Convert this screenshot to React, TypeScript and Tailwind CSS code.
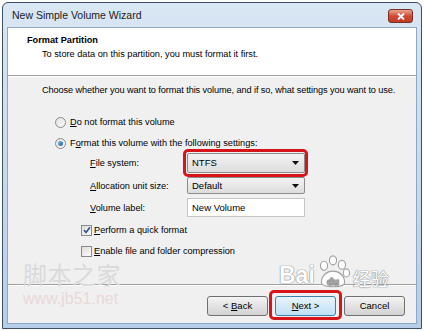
import React from "react";

const font = { fontFamily: '"Liberation Sans", Arial, sans-serif' };
const cjk = { fontFamily: '"Noto Sans CJK SC", sans-serif' };

function U({ children }: { children: React.ReactNode }) {
  return <span className="underline underline-offset-1">{children}</span>;
}

function Radio({ checked }: { checked?: boolean }) {
  return (
    <span className="flex h-[11px] w-[11px] items-center justify-center rounded-full border border-[#8a8a8a] bg-gradient-to-br from-[#e2e2e2] to-[#fbfbfb]">
      {checked && (
        <span className="h-[5px] w-[5px] rounded-full bg-gradient-to-br from-[#7fb6e8] to-[#1c5fa8]" />
      )}
    </span>
  );
}

function Check({ checked }: { checked?: boolean }) {
  return (
    <span className="flex h-[11px] w-[11px] items-center justify-center border border-[#8a8a8a] bg-gradient-to-br from-[#dedede] to-[#fbfbfb]">
      {checked && (
        <svg width="8" height="8" viewBox="0 0 8 8">
          <path d="M1 4 L3 6.5 L7 1.2" fill="none" stroke="#2a4f8f" strokeWidth="1.5" />
        </svg>
      )}
    </span>
  );
}

function Combo({ value, h }: { value: string; h: string }) {
  return (
    <div
      className={`flex ${h} w-[118px] items-center justify-between rounded-[2px] border border-[#8c8c8c] bg-gradient-to-b from-[#f3f3f3] to-[#dddddd] pl-[4px] pr-[5px]`}
    >
      <span className="text-[9.5px] text-black">{value}</span>
      <svg width="7" height="4" viewBox="0 0 7 4">
        <path d="M0 0 H7 L3.5 4 Z" fill="#111" />
      </svg>
    </div>
  );
}

function Button({ children, focus }: { children: React.ReactNode; focus?: boolean }) {
  return (
    <div
      className={`flex h-[20px] w-[61px] items-center justify-center rounded-[3px] border text-[9.5px] text-black ${
        focus
          ? "border-[#3c7fb1] bg-gradient-to-b from-[#e8f4fc] to-[#bfe0f4]"
          : "border-[#707070] bg-gradient-to-b from-[#f4f4f4] to-[#d2d2d2]"
      }`}
    >
      {children}
    </div>
  );
}

export default function App() {
  return (
    <div className="h-[331px] w-[424px] overflow-hidden bg-white p-[2px]" style={font}>
      <div className="relative flex h-[327px] w-[420px] flex-col rounded-t-[6px] border border-[#3d4f63] bg-gradient-to-b from-[#d9e6f4] to-[#b6cee8] px-[4px] pb-[4px]">
        {/* title bar */}
        <div className="flex h-[24px] shrink-0 items-center justify-between">
          <span className="pl-[5px] pt-[2px] text-[10.5px] text-[#1b1b1b]">New Simple Volume Wizard</span>
          <div className="mr-[4px] mt-[2px] flex h-[14px] w-[25px] items-center justify-center rounded-[3px] border border-[#7a2f24] bg-gradient-to-b from-[#e8a493] via-[#cf4a36] to-[#c33b27]">
            <svg width="8" height="7" viewBox="0 0 8 7">
              <path d="M1 0.5 L7 6.5 M7 0.5 L1 6.5" stroke="#fff" strokeWidth="1.8" />
            </svg>
          </div>
        </div>

        {/* client */}
        <div className="flex flex-1 flex-col border border-[#8ea7c4] bg-[#f0f0f0]">
          <div className="flex h-[47px] shrink-0 flex-col bg-white pl-[19px] pt-[5px] text-[9.2px] leading-[14px] text-black">
            <span className="font-bold">Format Partition</span>
            <span className="pl-[15px]">To store data on this partition, you must format it first.</span>
          </div>
          <div className="h-px bg-[#a0a0a0]" />
          <div className="h-px bg-white" />

          <div className="relative flex h-[207px] flex-col pl-[34px] pt-[6px] text-[9.2px] leading-[14px] text-black">
            <span className="whitespace-nowrap tracking-[-0.1px]">
              Choose whether you want to format this volume, and if so, what settings you want to use.
            </span>

            <div className="mt-[18px] flex items-center gap-[4px] pl-[13px]">
              <Radio />
              <span>
                <U>D</U>o not format this volume
              </span>
            </div>
            <div className="mt-[7px] flex items-center gap-[4px] pl-[13px]">
              <Radio checked />
              <span>
                F<U>o</U>rmat this volume with the following settings:
              </span>
            </div>

            <div className="mt-[3px] grid grid-cols-[97px_118px] items-center gap-y-[4px] pl-[48px]">
              <span>
                <U>F</U>ile system:
              </span>
              <div className="relative">
                <div className="pointer-events-none absolute -bottom-[4px] -left-[4px] -right-[3px] -top-[4px] rounded-[5px] border-[3px] border-[#d8141b]" />
                <Combo value="NTFS" h="h-[20px]" />
              </div>
              <span>
                <U>A</U>llocation unit size:
              </span>
              <Combo value="Default" h="h-[17px]" />
              <span>
                <U>V</U>olume label:
              </span>
              <div className="flex h-[19px] w-[118px] items-center border border-[#c5c5c5] bg-white pl-[4px] text-[9.5px]">
                New Volume
              </div>
            </div>

            <div className="mt-[6px] flex items-center gap-[2px] pl-[39px]">
              <Check checked />
              <span>
                <U>P</U>erform a quick format
              </span>
            </div>
            <div className="mt-[7px] flex items-center gap-[2px] pl-[39px]">
              <Check />
              <span>
                <U>E</U>nable file and folder compression
              </span>
            </div>

            {/* watermark */}
            <span
              className="pointer-events-none absolute left-[15px] top-[185px] text-[24px] leading-none tracking-[0.5px] text-[#dadada]"
              style={cjk}
            >
              脚本之家
            </span>
          </div>

          <div className="h-px bg-[#a0a0a0]" />
          <div className="h-px bg-white" />

          <div className="relative flex flex-1 items-start justify-end gap-[7px] pr-[11px] pt-[10px]">
            <span className="pointer-events-none absolute left-[15px] top-[5px] text-[16px] leading-none text-[#ead8d8]">
              www.jb51.net
            </span>
            <span
              className="pointer-events-none absolute left-[271px] top-[-31px] flex items-end font-bold leading-none text-white"
              style={{ textShadow: "0 0 1px #8f8f8f, 0 0 1px #8f8f8f, 0 0 1px #8f8f8f" }}
            >
              <span className="pb-[2px] text-[23px]">Bai</span>
              <svg width="36" height="34" viewBox="0 0 40 38">
                <g fill="#fff" stroke="#a0a0a0" strokeWidth="1.2">
                  <ellipse cx="10" cy="12" rx="4" ry="5" />
                  <ellipse cx="20" cy="6" rx="4" ry="5" />
                  <ellipse cx="30" cy="11" rx="4" ry="5" />
                  <ellipse cx="35" cy="20" rx="3.5" ry="4.5" />
                  <path d="M7 31 C7 23 13 18 20 18 C27 18 33 23 33 31 C33 37 7 37 7 31 Z" />
                </g>
                <text x="20" y="33" textAnchor="middle" fontSize="11" fontWeight="bold" fill="#fff" stroke="#9a9a9a" strokeWidth="0.5">
                  du
                </text>
              </svg>
              <span className="pb-[2px] pl-[2px] text-[18px] font-normal" style={cjk}>
                经验
              </span>
            </span>
            <Button>
              &lt;&nbsp;<U>B</U>ack
            </Button>
            <div className="relative">
              <div className="pointer-events-none absolute -bottom-[4px] -left-[6px] -right-[6px] -top-[6px] rounded-[5px] border-[3px] border-[#d8141b]" />
              <Button focus>
                <U>N</U>ext &gt;
              </Button>
            </div>
            <div className="ml-[1px]">
              <Button>Cancel</Button>
            </div>
          </div>
        </div>
      </div>
    </div>
  );
}
